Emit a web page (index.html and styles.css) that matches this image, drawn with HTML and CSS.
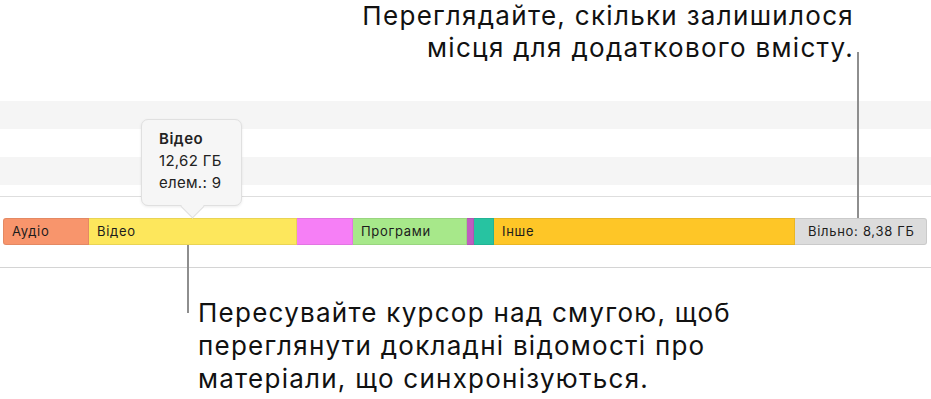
FILE: index.html
```html
<html><head>
	<meta charset="UTF-8">
	<link rel="stylesheet" href="styles.css">
</head>

<body>
	<div class="page">
		<div class="note-top">
			Переглядайте, скільки залишилося<br>
			місця для додаткового вмісту.
		</div>

		<div class="rows">
			<div class="row shade"></div>
			<div class="row"></div>
			<div class="row shade"></div>
			<div class="row short"></div>
		</div>

		<div class="bar">
			<div class="seg audio">Аудіо</div>
			<div class="seg video">Відео</div>
			<div class="seg photo"></div>
			<div class="seg apps">Програми</div>
			<div class="seg books"></div>
			<div class="seg docs"></div>
			<div class="seg other">Інше</div>
			<div class="seg free">Вільно: 8,38 ГБ</div>
		</div>

		<div class="rule"></div>

		<div class="note-bottom">
			Пересувайте курсор над смугою, щоб<br>
			переглянути докладні відомості про<br>
			матеріали, що синхронізуються.
		</div>

		<div class="tip">
			<b>Відео</b>
			<span>12,62 ГБ</span>
			<span>елем.: 9</span>
		</div>

		<div class="pointer pointer-top"></div>
		<div class="pointer pointer-bottom"></div>
	</div>
</body></html>
```
FILE: styles.css
```css
* {
	box-sizing: border-box;
}
body {
	margin: 0;
	background-color: #fff;
	color: #111;
	font-family: Inter, "Noto Sans", sans-serif;
}
.page {
	position: relative;
	width: 931px;
	height: 399px;
	overflow: hidden;
}
.note-top {
	padding: 0 77px 0 0;
	text-align: right;
	font-size: 26px;
	line-height: 32px;
	letter-spacing: 1.3px;
	height: 101px;
}
.rows {
	display: flex;
	flex-direction: column;
	border-bottom: 1px solid #dedede;
}
.row {
	height: 28px;
}
.row.shade {
	background-color: #f5f5f5;
}
.row.short {
	height: 11px;
}
.bar {
	display: flex;
	margin: 21px 4px 0 3px;
	height: 27px;
	font-size: 13px;
	line-height: 25px;
	letter-spacing: 0.7px;
	color: #1c1c1c;
}
.seg {
	border: 1px solid rgba(0, 0, 0, 0.08);
	border-left: none;
	padding-left: 8px;
	white-space: nowrap;
	overflow: hidden;
}
.audio {
	width: 86px;
	background-color: #f8956c;
	border-left: 1px solid rgba(0, 0, 0, 0.08);
	border-radius: 3px 0 0 3px;
}
.video { width: 208px; background-color: #fde75c; }
.photo { width: 56px; background-color: #f67ff6; }
.apps { width: 114px; background-color: #a7e88a; }
.books { width: 7px; background-color: #bf5dbf; padding: 0; }
.docs { width: 20px; background-color: #27c3a1; padding: 0; }
.other { width: 301px; background-color: #fec627; }
.free {
	flex: 1;
	background-color: #dcdcdc;
	padding-left: 13px;
	border-radius: 0 3px 3px 0;
}
.rule {
	margin-top: 22px;
	height: 1px;
	background-color: #d4d4d4;
}
.note-bottom {
	padding: 28px 0 0 198px;
	font-size: 26px;
	line-height: 33px;
	letter-spacing: 1.25px;
}
.tip {
	position: absolute;
	left: 141px;
	top: 119px;
	width: 101px;
	height: 87px;
	padding: 8px 0 0 17px;
	background-color: #f6f6f6;
	border: 1px solid #e0e0e0;
	border-radius: 7px;
	box-shadow: 0 1px 3px rgba(0, 0, 0, 0.08);
	display: flex;
	flex-direction: column;
	font-size: 15px;
	line-height: 22px;
	letter-spacing: 0.3px;
	color: #222;
}
.tip b {
	font-weight: 600;
	letter-spacing: 0.5px;
}
.tip::after {
	content: "";
	position: absolute;
	left: 42px;
	bottom: -10px;
	width: 16px;
	height: 16px;
	background-color: #f6f6f6;
	border-right: 1px solid #e0e0e0;
	border-bottom: 1px solid #e0e0e0;
	transform: rotate(45deg);
}
.pointer {
	position: absolute;
	width: 2px;
	background-color: #8e8e8e;
}
.pointer-top {
	left: 857px;
	top: 52px;
	height: 166px;
}
.pointer-bottom {
	left: 187px;
	top: 245px;
	height: 68px;
}
```
